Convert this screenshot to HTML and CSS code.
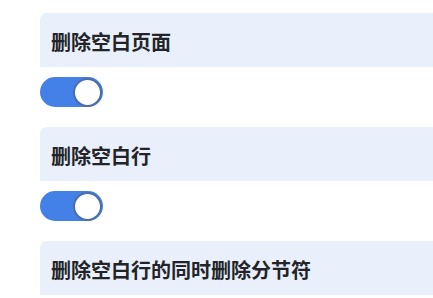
FILE: index.html
```html
<!DOCTYPE html>
<html lang="zh">
<head>
<meta charset="utf-8">
<link rel="stylesheet" href="styles.css">
</head>
<body>
<div class="list">
  <div class="item">
    <div class="label">删除空白页面</div>
    <div class="switch on"><span class="knob"></span></div>
  </div>
  <div class="item">
    <div class="label">删除空白行</div>
    <div class="switch on"><span class="knob"></span></div>
  </div>
  <div class="item">
    <div class="label">删除空白行的同时删除分节符</div>
  </div>
</div>
</body>
</html>
```
FILE: styles.css
```css
html, body {
  margin: 0;
  padding: 0;
  background: #ffffff;
  overflow: hidden;
}
body {
  width: 433px;
  height: 298px;
  font-family: "Noto Sans CJK SC", "Noto Sans", sans-serif;
}
.list {
  padding: 13px 0 0 40px;
  display: flex;
  flex-direction: column;
}
.item {
  display: flex;
  flex-direction: column;
  margin-bottom: 20px;
}
.item:last-child {
  margin-bottom: 0;
}
.label {
  height: 54px;
  box-sizing: border-box;
  padding: 3px 0 0 11px;
  display: flex;
  align-items: center;
  background: #e9effb;
  border-radius: 7px 0 0 0;
  font-size: 20px;
  font-weight: 700;
  color: #222428;
}
.switch {
  margin-top: 10px;
  width: 63px;
  height: 30px;
  border-radius: 15px;
  background: #4381e8;
  display: flex;
  align-items: center;
  justify-content: flex-end;
  box-sizing: border-box;
  padding-right: 1px;
}
.knob {
  width: 29px;
  height: 29px;
  box-sizing: border-box;
  border-radius: 50%;
  background: #ffffff;
  border: 2px solid #4b6ea8;
}
```
